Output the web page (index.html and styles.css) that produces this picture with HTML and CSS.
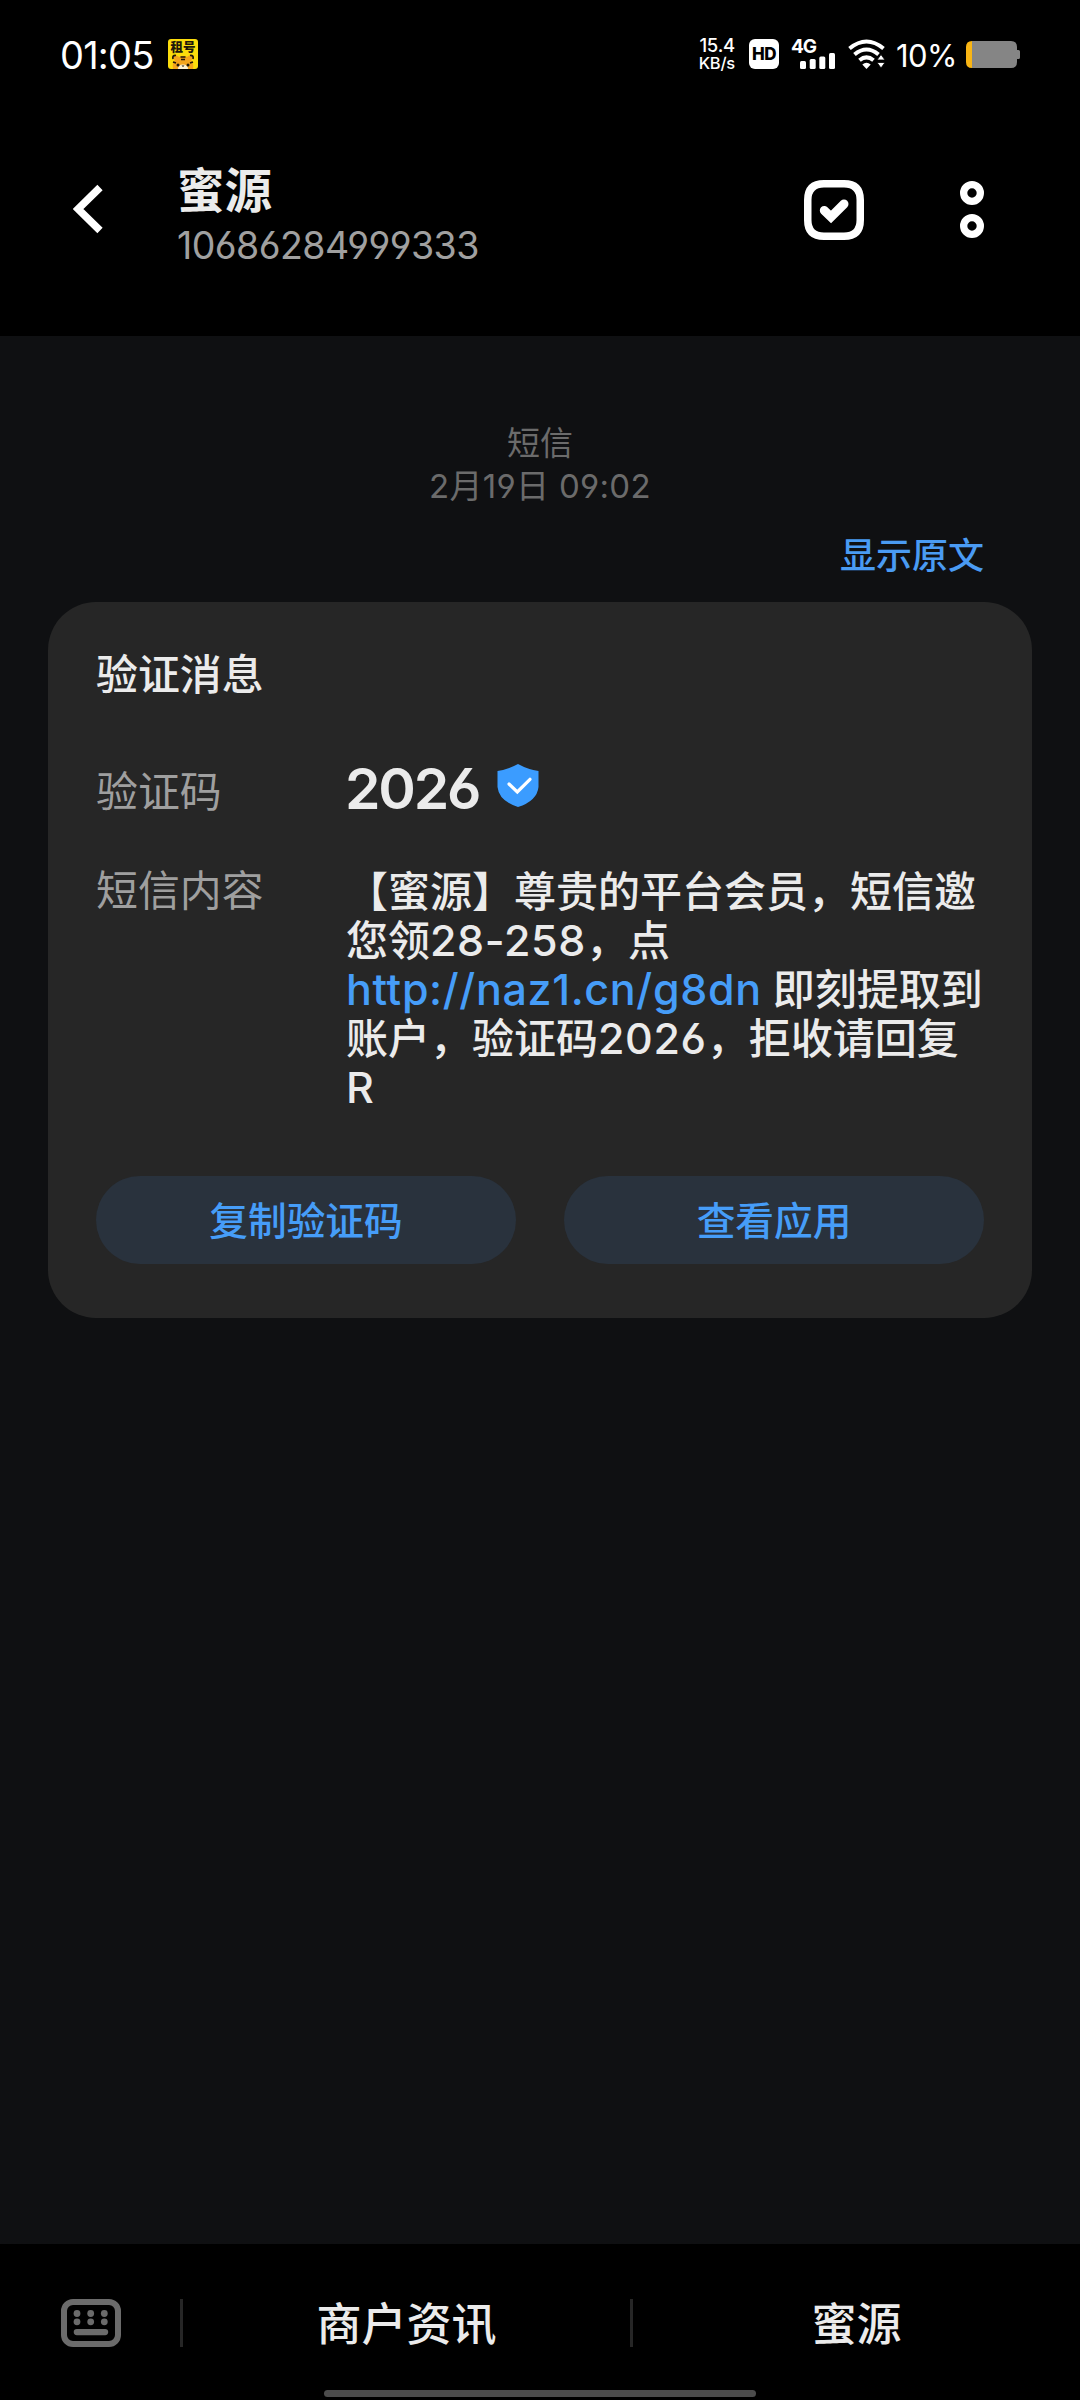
FILE: index.html
```html
<!DOCTYPE html>
<html lang="zh-CN">
<head>
<meta charset="utf-8">
<title>蜜源</title>
<link rel="stylesheet" href="styles.css">
</head>
<body>
<div class="screen">
  <div class="status">
    <span class="clock">01:05</span>
    <svg class="app-badge" viewBox="0 0 30 30" width="30" height="30">
      <rect width="30" height="30" rx="3" fill="#fbdc0c"/>
      <text x="15" y="13.4" text-anchor="middle" class="badge-text">租号</text>
      <path d="M5 30Q4 24 7 21Q4 20 5 17Q8 15 11 18Q15 16 19 18Q22 15 25 17Q26 20 23 21Q26 24 25 30Z" fill="#f4a51c"/>
      <path d="M5 20Q4 16 8 16.500M25 20Q26 16 22 16.500M12.500 18H17.500M13 20.500H17M5 23L8 24M25 23L22 24" stroke="#20170a" stroke-width="1.700" fill="none"/>
      <path d="M10 30Q10 25.500 15 25.500Q20 25.500 20 30Z" fill="#fff2cf"/>
      <circle cx="10" cy="26" r="1.500" fill="#20170a"/><circle cx="20" cy="26" r="1.500" fill="#20170a"/>
      <path d="M13.500 26.500h3l-1.500 1.500z" fill="#20170a"/>
    </svg>
    <div class="speed"><span>15.4</span><span class="unit">KB/s</span></div>
    <div class="hd">HD</div>
    <div class="mobile">
      <span class="net">4G</span>
      <svg class="bars" viewBox="0 0 35 16" width="35" height="16" fill="#fff">
        <rect x="0" y="8" width="6" height="8" rx="1.500"/><rect x="9.700" y="6" width="6" height="10" rx="1.500"/><rect x="19.300" y="3.500" width="6" height="12.500" rx="1.500"/><rect x="29" y="0" width="6" height="16" rx="1.500"/>
      </svg>
    </div>
    <svg class="wifi" viewBox="0 0 37 30" width="37" height="30">
      <g fill="none" stroke="#fff" stroke-width="4">
        <path d="M1.500 9.500Q18.500-4.500 35.500 9.500"/>
        <path d="M6.500 15.500Q18.500 5.500 30.500 15.500"/>
        <path d="M11.500 21.300Q18.500 15.500 25.500 21.300"/>
      </g>
      <path d="M14.300 25.500Q18.500 22 22.700 25.500L18.500 30Z" fill="#fff"/>
      <path d="M33 15.500L37 21H29ZM33 29L37 23.500H29Z" fill="#fff" stroke="#000" stroke-width=".8"/>
    </svg>
    <span class="percent">10%</span>
    <svg class="battery" viewBox="0 0 54 27" width="54" height="27">
      <path d="M6 0H45Q51 0 51 6V9H52.500Q54 9 54 10.500V16.500Q54 18 52.500 18H51V21Q51 27 45 27H6V0Z" fill="#858585"/>
      <path d="M6 0Q0 0 0 6V21Q0 27 6 27Z" fill="#f9b514"/>
    </svg>
  </div>

  <header class="header">
    <svg class="back" viewBox="0 0 30 50" width="30" height="50"><path d="M27 3.500L5 25L27 46.500" fill="none" stroke="#fff" stroke-width="7.500"/></svg>
    <div class="who">
      <h1 class="name">蜜源</h1>
      <div class="number">10686284999333</div>
    </div>
    <svg class="select" viewBox="0 0 60 60" width="60" height="60" fill="none" stroke="#fff">
      <path d="M20 3.750H40Q56.250 3.750 56.250 20V40Q56.250 56.250 40 56.250H20Q3.750 56.250 3.750 40V20Q3.750 3.750 20 3.750Z" stroke-width="7.500"/>
      <path d="M20.300 30.500L27 37L40 24" stroke-width="9" stroke-linecap="round" stroke-linejoin="miter"/>
    </svg>
    <svg class="more" viewBox="0 0 24 58" width="24" height="58" fill="none" stroke="#fff" stroke-width="7.300">
      <circle cx="12" cy="12" r="8.350"/><circle cx="12" cy="45" r="8.350"/>
    </svg>
  </header>

  <main class="thread">
    <div class="stamp"><div>短信</div><div class="date">2月19日 09:02</div></div>
    <div class="original">显示原文</div>
    <section class="card">
      <h2 class="card-title">验证消息</h2>
      <div class="row code-row">
        <span class="label">验证码</span>
        <span class="code">2026</span>
        <svg class="shield" viewBox="0 0 42 43" width="42" height="43">
          <path d="M21 0Q31 5.500 41.500 7V23Q40 37 21 43Q2 37 .5 23V7Q11 5.500 21 0Z" fill="#3b9cff"/>
          <path d="M12 20L20.300 28L33 15.300" fill="none" stroke="#fff" stroke-width="3.200" stroke-linecap="round"/>
        </svg>
      </div>
      <div class="row">
        <span class="label">短信内容</span>
        <p class="body">【蜜源】尊贵的平台会员，短信邀<br>您领<span class="num">28-258</span>，点<br><a class="link">http://naz1.cn/g8dn</a> 即刻提取到<br>账户，验证码<span class="num">2026</span>，拒收请回复<br><span class="num">R</span></p>
      </div>
      <div class="actions"><div class="btn">复制验证码</div><div class="btn">查看应用</div></div>
    </section>
  </main>

  <footer class="footer">
    <div class="menu">
      <svg class="keyboard" viewBox="0 0 60 48" width="60" height="48" fill="#6b6b6b">
        <rect x="3" y="3" width="54" height="42" rx="9" fill="none" stroke="#6b6b6b" stroke-width="6"/>
        <circle cx="16" cy="14.500" r="3.400"/><circle cx="29.700" cy="14.500" r="3.400"/><circle cx="43.300" cy="14.500" r="3.400"/>
        <circle cx="16" cy="22.800" r="3.400"/><circle cx="29.700" cy="22.800" r="3.400"/><circle cx="43.300" cy="22.800" r="3.400"/>
        <rect x="12.700" y="30" width="34.500" height="6.200" rx="3.100"/>
      </svg>
      <div class="tab">商户资讯</div>
      <div class="tab">蜜源</div>
    </div>
    <div class="home"></div>
  </footer>
</div>
</body>
</html>
```
FILE: styles.css
```css
* { box-sizing: border-box; }
body { margin: 0; background: #000; }
.screen {
  width: 1080px; height: 2400px; display: flex; flex-direction: column;
  font-family: Inter, "Noto Sans CJK SC", sans-serif; color: #ebebeb;
  font-feature-settings: "cv03", "cv04"; white-space: nowrap;
}
h1, h2, p { margin: 0; font-weight: 500; }
svg { display: block; flex: none; }

.status { height: 108px; display: flex; align-items: center; padding: 0 60px; color: #fff; }
.clock { width: 108px; padding-top: 2px; font-size: 38px; line-height: 40px; letter-spacing: -.8px; }
.badge-text { font-size: 12.5px; font-weight: 900; fill: #20170a; }
.speed { margin: 0 14px 0 auto; width: 37px; display: flex; flex-direction: column; align-items: flex-end; font-size: 18.5px; line-height: 18px; letter-spacing: -.2px; font-weight: 500; }
.unit { font-size: 16.5px; }
.hd { width: 30px; height: 30px; border-radius: 6px; background: #fff; color: #000; font-weight: 800; font-size: 17px; line-height: 30px; text-align: center; letter-spacing: -.5px; }
.mobile { width: 44px; height: 30px; margin: 0 13px 0 12px; }
.net { display: block; height: 14px; line-height: 15px; font-size: 19px; font-weight: 700; letter-spacing: -1px; }
.bars { margin-left: 9px; }
.percent { margin: 2px 0 0 11px; width: 70px; font-size: 31px; letter-spacing: -.6px; }

.header { height: 228px; display: flex; padding: 0 96px 0 73px; }
.back { margin-top: 76px; }
.who { margin: 55px auto 0 74px; }
.name { font-size: 47.5px; line-height: 56px; font-weight: 600; }
.number { font-size: 37.5px; line-height: 53px; color: #a0a0a0; letter-spacing: -.55px; }
.select { margin-top: 72px; }
.more { margin: 73px 0 0 96px; }

.thread { flex: 1; background: #0f1012; }
.stamp { padding-top: 86px; text-align: center; font-size: 33px; line-height: 43px; color: #6b6b6b; }
.date { letter-spacing: .3px; }
.original { margin: 23px 96px 0 0; height: 50px; line-height: 50px; font-size: 36px; font-weight: 500; color: #4a9bf3; text-align: right; }
.card { margin: 21px 48px 0; width: 984px; height: 716px; padding: 43px 48px 54px; border-radius: 48px; background: #262626; display: flex; flex-direction: column; }
.card-title { font-size: 41.9px; line-height: 60px; }
.row { display: flex; }
.label { width: 249px; font-size: 41.9px; line-height: 60px; color: #9f9f9f; }
.code-row { margin: 57px 0 39px; }
.code { width: 152px; font-size: 57px; line-height: 54px; font-weight: 600; letter-spacing: -2.2px; }
.shield { margin-top: 2px; }
.body { font-size: 42px; line-height: 49px; padding: 6px 0 0 1px; }
.num, .link { font-size: 43px; line-height: 1; letter-spacing: .6px; }
.link { color: #469df8; letter-spacing: .65px; }
.actions { margin-top: auto; display: flex; gap: 48px; }
.btn { flex: 1; height: 88px; border-radius: 44px; background: #29323d; color: #469df8; text-align: center; font-size: 38.7px; line-height: 90px; font-weight: 500; }

.footer { height: 156px; background: #000; }
.menu { height: 146px; display: flex; align-items: center; padding-top: 12px; }
.keyboard { margin: 0 59px 0 61px; }
.tab { flex: 1; height: 48px; line-height: 51px; border-left: 3px solid #262626; text-align: center; font-size: 45px; font-weight: 500; }
.home { width: 432px; height: 7px; border-radius: 4px; margin: 0 auto; background: #4c4c4c; }
```
